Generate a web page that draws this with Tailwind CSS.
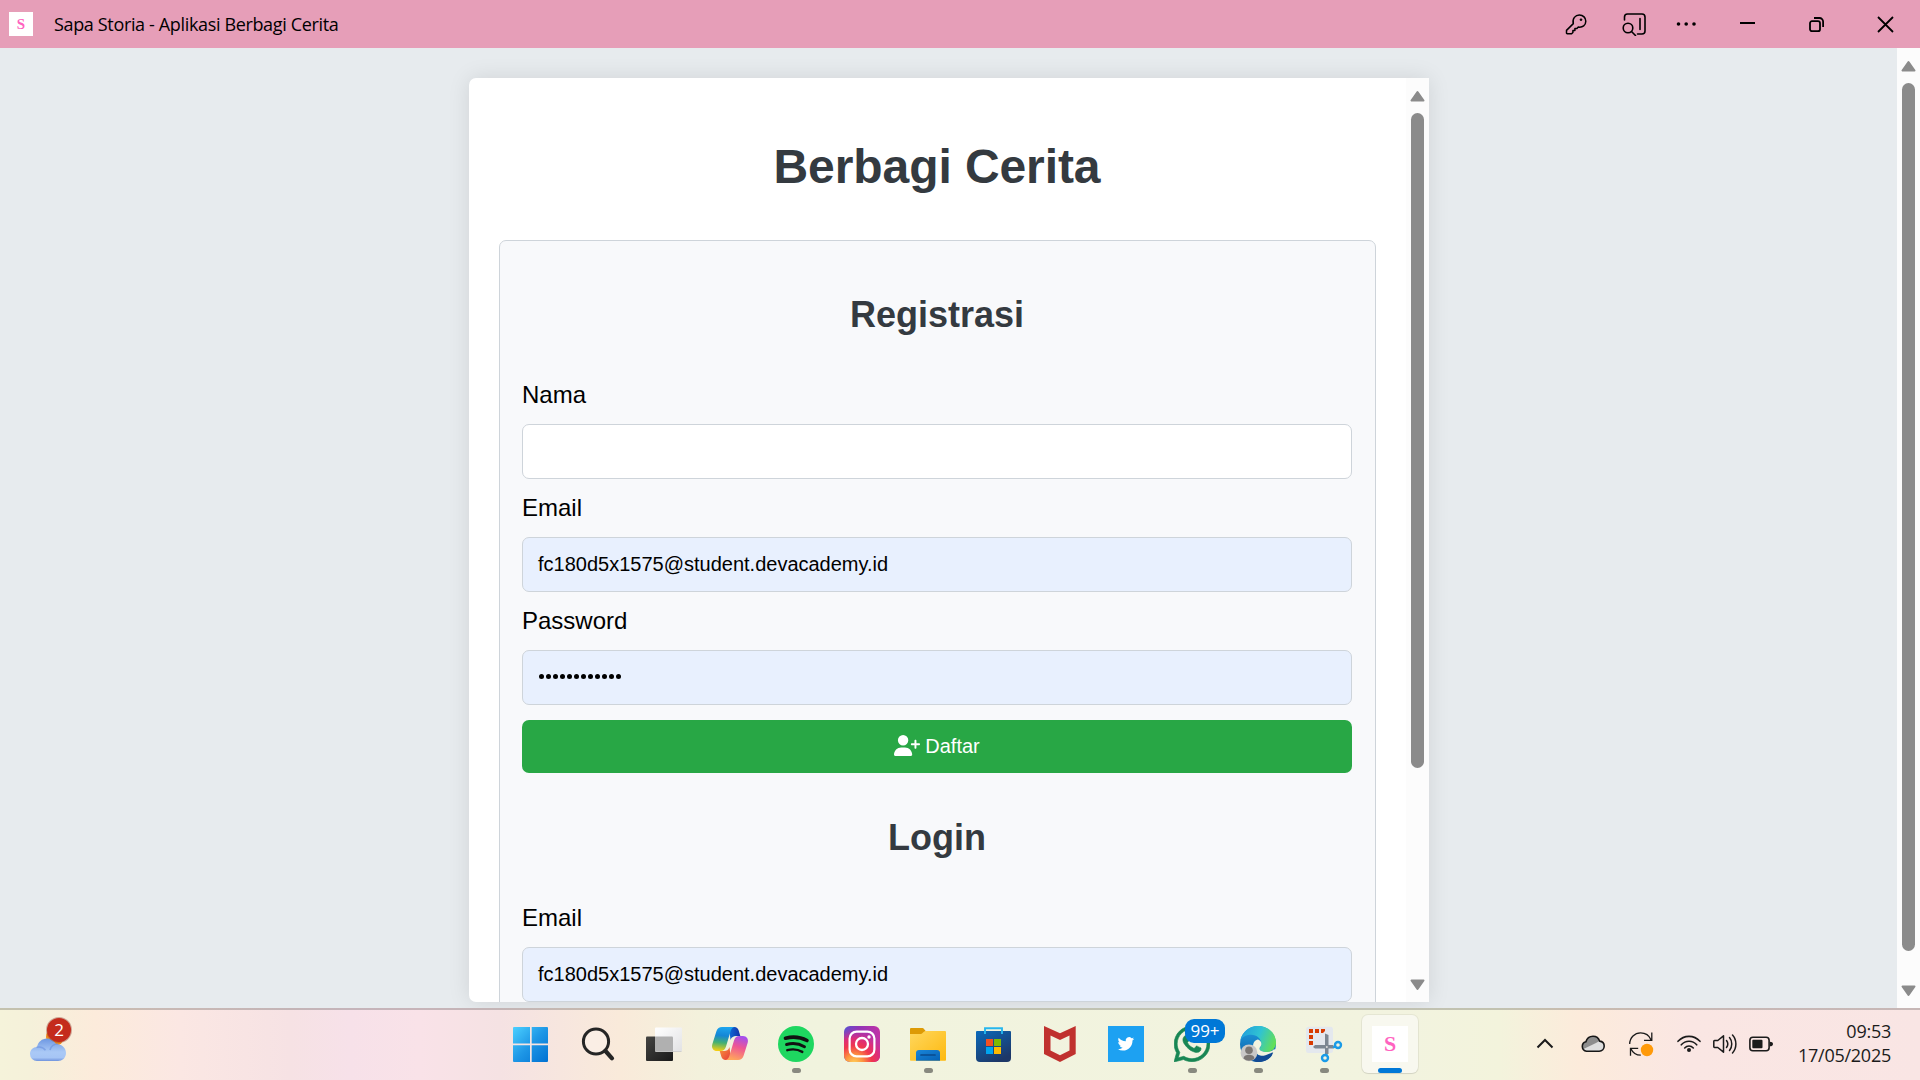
<!DOCTYPE html>
<html lang="id">
<head>
<meta charset="utf-8">
<title>Sapa Storia - Aplikasi Berbagi Cerita</title>
<script src="https://cdn.jsdelivr.net/npm/@tailwindcss/browser@4"></script>
</head>
<body class="w-[1920px] h-[1080px] overflow-hidden flex flex-col font-['Liberation_Sans',Arial,sans-serif] text-black">

<!-- Title bar -->
<header class="h-12 shrink-0 bg-[#e69eb8] flex items-center pl-[9px] font-['Open_Sans',sans-serif]">
  <div class="size-6 bg-white flex items-center justify-center font-['Liberation_Serif',serif] font-bold text-[15px] leading-none text-[#ff63c0]">S</div>
  <h1 class="ml-[21px] text-[18px] tracking-[-0.35px] leading-6 whitespace-nowrap">Sapa Storia - Aplikasi Berbagi Cerita</h1>
  <div class="ml-auto flex items-center">
    <svg class="w-6 h-6 mr-[34px]" viewBox="0 0 24 24" fill="none" stroke="#000" stroke-width="1.5" stroke-linejoin="round"><path d="M9.3 11.6C8 6.5 11.500 3 15.300 3c4 0 6.500 2.900 6.500 6.200 0 3.800-3.200 6.600-7.500 5.800l-1.400 1.500h-2v2h-2v2L7.600 21.700H3.200c-.4 0-.7-.3-.7-.7v-2.600z"/><circle cx="17" cy="7.700" r="1" fill="#000" stroke-width=".6"/></svg>
    <svg class="w-6 h-6 mr-[28px]" viewBox="0 0 24 24" fill="none" stroke="#000" stroke-width="1.600" stroke-linecap="round"><path d="M2.500 8V5a3 3 0 0 1 3-3H20a3 3 0 0 1 3 3v14a3 3 0 0 1-3 3h-4.500M18 6.500v11M9.500 19.500l4 4"/><circle cx="6" cy="16" r="4.800"/></svg>
    <svg class="w-6 h-6 mr-[42px]" viewBox="0 0 24 24"><circle cx="4.500" cy="12" r="1.800"/><circle cx="12.200" cy="12" r="1.800"/><circle cx="20" cy="12" r="1.800"/></svg>
    <svg class="w-[15px] h-6 mr-[54px]" viewBox="0 0 15 24"><rect y="10" width="15" height="2"/></svg>
    <svg class="w-[15px] h-[15px] mr-[54px] overflow-visible" viewBox="0 0 15 15" fill="none" stroke="#000" stroke-width="1.800"><rect x="1" y="4.200" width="10" height="10" rx="2"/><path d="M5 1h5.500A3.600 3.600 0 0 1 14.100 4.600V10"/></svg>
    <svg class="w-[15px] h-[15px] mr-[27px] overflow-visible" viewBox="0 0 15 15" stroke="#000" stroke-width="1.800"><path d="M0 0l15 15M15 0L0 15"/></svg>
  </div>
</header>

<!-- Web page -->
<main class="h-[960px] shrink-0 bg-[#e7ebee] flex overflow-hidden">
  <div class="flex-1 pt-[30px] pl-[469px]">
    <div class="w-[960px] h-[924px] bg-white rounded-l-[7px] flex overflow-hidden shadow-[0_0_22px_rgba(0,0,0,0.1)]">
      <div class="w-[937px] h-full pt-[61px] pl-[30px] pr-[30px]">
        <h1 class="text-center text-[48px] leading-[55px] font-bold text-[#343a40] tracking-[-0.08px] pr-px">Berbagi Cerita</h1>
        <section class="mt-[46px] h-[1200px] border border-[#ced4da] rounded-[7px] bg-[#f8f9fb] pl-[22px] pr-[23px] pt-[53px]">
          <h2 class="text-center text-[36px] leading-[41px] font-bold text-[#343a40] mb-[46px]">Registrasi</h2>
          <form class="flex flex-col gap-[15px] text-[24px] leading-[28px]">
            <label>Nama</label>
            <div class="h-[55px] bg-white border border-[#ced4da] rounded-[7px]"></div>
            <label>Email</label>
            <div class="h-[55px] bg-[#e8f0fe] border border-[#ced4da] rounded-[7px] px-[15px] pb-[2px] flex items-center text-[20px]">fc180d5x1575@student.devacademy.id</div>
            <label>Password</label>
            <div class="h-[55px] bg-[#e8f0fe] border border-[#ced4da] rounded-[7px] px-4 pb-[2px] flex items-center gap-[2px]">
              <i class="size-[5px] rounded-full bg-black"></i><i class="size-[5px] rounded-full bg-black"></i><i class="size-[5px] rounded-full bg-black"></i><i class="size-[5px] rounded-full bg-black"></i><i class="size-[5px] rounded-full bg-black"></i><i class="size-[5px] rounded-full bg-black"></i><i class="size-[5px] rounded-full bg-black"></i><i class="size-[5px] rounded-full bg-black"></i><i class="size-[5px] rounded-full bg-black"></i><i class="size-[5px] rounded-full bg-black"></i><i class="size-[5px] rounded-full bg-black"></i><i class="size-[5px] rounded-full bg-black"></i>
            </div>
            <button type="button" class="h-[53px] bg-[#28a745] rounded-[7px] pb-[2px] flex items-center justify-center gap-[5px] text-white text-[20px]">
              <svg class="w-[26px] h-[21px]" viewBox="0 0 640 512" fill="#fff"><path d="M96 128a128 128 0 1 1 256 0A128 128 0 1 1 96 128zM0 482.300C0 383.800 79.800 304 178.300 304h91.400C368.200 304 448 383.800 448 482.300c0 16.400-13.300 29.700-29.700 29.700H29.700C13.300 512 0 498.700 0 482.300zM504 312V248H440c-13.300 0-24-10.700-24-24s10.700-24 24-24h64V136c0-13.300 10.700-24 24-24s24 10.700 24 24v64h64c13.300 0 24 10.700 24 24s-10.700 24-24 24H552v64c0 13.300-10.700 24-24 24s-24-10.700-24-24z"/></svg>
              <span>Daftar</span>
            </button>
          </form>
          <h2 class="mt-[44px] text-center text-[36px] leading-[41px] font-bold text-[#343a40] mb-[46px]">Login</h2>
          <form class="flex flex-col gap-[15px] text-[24px] leading-[28px]">
            <label>Email</label>
            <div class="h-[55px] bg-[#e8f0fe] border border-[#ced4da] rounded-[7px] px-[15px] pb-[2px] flex items-center text-[20px]">fc180d5x1575@student.devacademy.id</div>
          </form>
        </section>
      </div>
      <div class="w-[23px] h-full bg-[#fcfcfc] flex flex-col items-center pt-3">
        <svg class="w-[15px] h-[12px] shrink-0" viewBox="0 0 15 12" fill="#8b8b8b" stroke="#8b8b8b" stroke-width="2" stroke-linejoin="round"><path d="M7.500 2L1.500 10.500h12z"/></svg>
        <div class="mt-[11px] w-[13px] h-[655px] rounded-full bg-[#8b8b8b]"></div>
        <svg class="mt-[211px] w-[15px] h-[12px] shrink-0" viewBox="0 0 15 12" fill="#8b8b8b" stroke="#8b8b8b" stroke-width="2" stroke-linejoin="round"><path d="M7.500 10L1.500 1.500h12z"/></svg>
      </div>
    </div>
  </div>
  <div class="w-[23px] h-full bg-[#fcfcfc] flex flex-col items-center pt-3">
    <svg class="w-[15px] h-[12px] shrink-0" viewBox="0 0 15 12" fill="#8b8b8b" stroke="#8b8b8b" stroke-width="2" stroke-linejoin="round"><path d="M7.500 2L1.500 10.500h12z"/></svg>
    <div class="mt-[11px] w-[13px] h-[868px] rounded-full bg-[#8b8b8b]"></div>
    <svg class="mt-[34px] w-[15px] h-[12px] shrink-0" viewBox="0 0 15 12" fill="#8b8b8b" stroke="#8b8b8b" stroke-width="2" stroke-linejoin="round"><path d="M7.500 10L1.500 1.500h12z"/></svg>
  </div>
</main>

<!-- Taskbar -->
<footer class="h-[72px] shrink-0 flex items-stretch font-['Open_Sans',sans-serif] bg-[linear-gradient(90deg,#f5f3da_0px,#f5f1da_30px,#fcebdb_95px,#fbe7e3_180px,#f6e2e4_290px,#f7e1e9_350px,#f9e2e8_420px,#f5e2e3_500px,#f9eada_620px,#f3f1dc_700px,#f1f3de_790px,#f2f3df_1400px,#f3f3dc_1500px,#fcebdb_1580px,#fae6e3_1690px,#f9e5e4_1920px)]">
  <div class="w-[499px] border-t-2 border-black/20 pl-[30px] pt-[4px]">
    <div class="relative w-9 h-[47px]">
      <svg class="w-9 h-[47px] overflow-visible" viewBox="0 0 36 47">
        <defs><linearGradient id="cl" x1="0" y1="0" x2="0" y2="1"><stop offset="0" stop-color="#6d97e2"/><stop offset=".6" stop-color="#aac9f6"/><stop offset=".85" stop-color="#a6c5f5"/><stop offset="1" stop-color="#6f93dd"/></linearGradient></defs>
        <circle cx="25" cy="23" r="9" fill="#f28a1c"/>
        <path d="M7 47a7 7 0 0 1-7-7c0-4 3-7 7-7C8 28 12 24.500 17 24.500c4 0 7 2 9 5.500 6 0 10 4 10 9 0 5-4 8-8 8z" fill="url(#cl)"/>
        <path d="M6.500 33.300c4-1 7 .3 9 3M20 36c1-4 4-6 8-6" fill="none" stroke="#6990dd" stroke-opacity=".6" stroke-width="1.500"/>
      </svg>
      <span class="absolute left-[17px] top-[4px] size-6 rounded-full bg-[#c42b1c] ring-1 ring-[#8d3a30]/40 text-white text-[17px] leading-6 text-center">2</span>
    </div>
  </div>

  <nav class="w-[924px] border-t-2 border-black/20 grid grid-cols-14">
    <div class="flex flex-col items-center pt-4"><svg class="size-9 overflow-visible" viewBox="0 0 36 36"><defs><linearGradient id="w" x1="0" y1="0" x2="1" y2="1" ><stop offset="0" stop-color="#4cd0ff"/><stop offset=".5" stop-color="#1e97e6"/><stop offset="1" stop-color="#0071d2"/></linearGradient></defs><path fill="url(#w)" d="M0 1h16v16.500H-1V2a1 1 0 0 1 1-1zM17.700 1H33a1 1 0 0 1 1 1v15.500H17.700zM-1 19.300h17V36H0a1 1 0 0 1-1-1zM17.700 19.300H34V35a1 1 0 0 1-1 1H17.700z"/></svg></div>
    <div class="flex flex-col items-center pt-4"><svg class="size-9" viewBox="0 0 36 36" fill="none" stroke="#252525"><circle cx="16" cy="15.500" r="12.600" stroke-width="3" fill="#fff" fill-opacity=".25"/><path d="M25.500 25l6.500 7.300" stroke-width="4.200" stroke-linecap="round"/></svg></div>
    <div class="flex flex-col items-center pt-4"><svg class="size-9 overflow-visible" viewBox="0 0 36 36"><defs><linearGradient id="tv" x1="0" y1="0" x2="1" y2="1"><stop offset="0" stop-color="#444442"/><stop offset="1" stop-color="#191919"/></linearGradient><linearGradient id="tl" x1="0" y1="0" x2="1" y2="1"><stop offset="0" stop-color="#fff"/><stop offset="1" stop-color="#e2e2e4"/></linearGradient></defs><rect y="10.500" width="27" height="24.500" rx="1" fill="url(#tv)"/><rect x="9" y="1.500" width="27" height="24" rx="1" fill="url(#tl)"/><path d="M9 10.500h17a1 1 0 0 1 1 1v14H10a1 1 0 0 1-1-1z" fill="#b0b0b0"/><path d="M9.500 25.500h26" stroke="#c9c9c9" stroke-width=".8"/></svg></div>
    <div class="flex flex-col items-center pt-4"><svg class="size-9 overflow-visible" viewBox="0 0 36 36"><defs><linearGradient id="c1" x1=".4" y1="0" x2=".3" y2="1"><stop offset="0" stop-color="#1ca4ee"/><stop offset=".35" stop-color="#1486d6"/><stop offset=".65" stop-color="#45b072"/><stop offset="1" stop-color="#f9cf10"/></linearGradient><linearGradient id="c2" x1=".7" y1="0" x2=".4" y2="1"><stop offset="0" stop-color="#a24ef0"/><stop offset=".45" stop-color="#ee5594"/><stop offset="1" stop-color="#ffa65c"/></linearGradient><linearGradient id="c3" x1="0" y1="0" x2="1" y2="0"><stop offset="0" stop-color="#0e6bd8"/><stop offset="1" stop-color="#1331a8"/></linearGradient><linearGradient id="c4" x1="0" y1="0" x2="1" y2="1"><stop offset="0" stop-color="#f9983a"/><stop offset="1" stop-color="#e5393b"/></linearGradient></defs>
      <path fill="url(#c3)" d="M17 1h5.500c2 0 3.500 1.200 4.200 3.500L28.300 10H24c-2.500 0-4.500 1-5.500 4z"/>
      <path fill="url(#c4)" d="M19 34h-5.500c-2 0-3.500-1.200-4.200-3.500L7.700 25H12c2.500 0 4.500-1 5.500-4z"/>
      <path fill="url(#c1)" d="M10 1h12.500c-2.200.6-3.200 2-4 4.500L14 20.500c-1 3.200-2.600 4.500-5.500 4.500H5c-3.600 0-5.800-3-4.700-6.800L4.500 5C5.400 2.400 7.300 1 10 1z"/>
      <path fill="url(#c2)" d="M26 34H13.500c2.200-.6 3.200-2 4-4.500L22 14.500c1-3.200 2.600-4.500 5.500-4.500H31c3.600 0 5.800 3 4.700 6.800L31.500 30c-.9 2.600-2.800 4-5.500 4z"/></svg></div>
    <div class="flex flex-col items-center pt-4"><svg class="size-9" viewBox="0 0 36 36" fill="none" stroke="#111" stroke-linecap="round"><circle cx="18" cy="18" r="18" fill="#1ed760" stroke="none"/><path d="M7.500 12.200c7.500-2 15-1.200 21.500 2.300" stroke-width="3.600"/><path d="M8.500 18.500c6-1.700 12.500-1 18 2.200" stroke-width="2.900"/><path d="M9.300 24.200c5-1.400 10.500-.9 15 1.700" stroke-width="2.400"/></svg><i class="mt-[6px] w-[9px] h-[5px] rounded-full bg-[#88897f]"></i></div>
    <div class="flex flex-col items-center pt-4"><svg class="size-9" viewBox="0 0 36 36" fill="none" stroke="#fff"><defs><linearGradient id="ig" x1="0" y1="0" x2="1" y2="0"><stop offset="0" stop-color="#5b51d0"/><stop offset=".4" stop-color="#8e35b8"/><stop offset="1" stop-color="#c132a6"/></linearGradient><radialGradient id="ih" cx=".28" cy="1.050" r="1"><stop offset="0" stop-color="#ffd45c"/><stop offset=".25" stop-color="#fd9440"/><stop offset=".5" stop-color="#f0364d"/><stop offset=".7" stop-color="#dd2d78"/><stop offset="1" stop-color="#c132a6" stop-opacity="0"/></radialGradient></defs><rect width="36" height="36" rx="6" fill="url(#ig)" stroke="none"/><rect width="36" height="36" rx="6" fill="url(#ih)" stroke="none"/><rect x="5.600" y="5.600" width="24.800" height="24.800" rx="7" stroke-width="2.200"/><circle cx="18" cy="18" r="6" stroke-width="2.300"/><circle cx="25" cy="11" r="1.700" fill="#fff" stroke="none"/></svg></div>
    <div class="flex flex-col items-center pt-4"><svg class="size-9" viewBox="0 0 36 36"><defs><linearGradient id="fo" x1="0" y1="0" x2="1" y2="1"><stop offset="0" stop-color="#ffd75e"/><stop offset="1" stop-color="#fdb90f"/></linearGradient><linearGradient id="fb" x1="0" y1="0" x2="1" y2="1"><stop offset="0" stop-color="#1a86d9"/><stop offset="1" stop-color="#0561b5"/></linearGradient></defs><path d="M0 10V3a1 1 0 0 1 1-1h11.500c1 0 2.500 2 3 3v3z" fill="#dd9a05"/><path d="M0 8h11c1.500 0 2.500-3 4.500-3H35a1 1 0 0 1 1 1v28a.8.8 0 0 1-.8.800H.8A.8.800 0 0 1 0 34z" fill="url(#fo)"/><path d="M6 34.800V27a3 3 0 0 1 3-3h18a3 3 0 0 1 3 3v7.800z" fill="url(#fb)"/><path d="M11 29h14" stroke="#0a4a8c" stroke-width="1.700" stroke-linecap="round"/></svg><i class="mt-[6px] w-[9px] h-[5px] rounded-full bg-[#88897f]"></i></div>
    <div class="flex flex-col items-center pt-4"><svg class="size-9" viewBox="0 0 36 36"><defs><linearGradient id="st" x1="0" y1="0" x2=".6" y2="1"><stop offset="0" stop-color="#0a69bb"/><stop offset="1" stop-color="#1d3767"/></linearGradient></defs><path d="M0 6a1 1 0 0 1 1-1h33a1 1 0 0 1 1 1v26a4 4 0 0 1-4 4H4a4 4 0 0 1-4-4z" fill="url(#st)"/><path d="M9 8V2.200h17V8" fill="none" stroke="#27b7ee" stroke-width="1.900"/><path fill="#f25022" d="M10 13h7v7h-7z"/><path fill="#7fba00" d="M18 13h7v7h-7z"/><path fill="#00a4ef" d="M10 21h7v7h-7z"/><path fill="#ffb900" d="M18 21h7v7h-7z"/></svg></div>
    <div class="flex flex-col items-center pt-4"><svg class="size-9" viewBox="0 0 36 36"><path fill="#c0312e" fill-rule="evenodd" d="M2 0l16 7.300L33.700 0v28L18 36 2 28zM8.500 9.500v15L18 29.200l9.500-4.700v-15L18 14z"/></svg></div>
    <div class="flex flex-col items-center pt-4"><svg class="size-9" viewBox="0 0 36 36"><path fill="#1da1f2" d="M0 0h36v36H0z"/><path fill="#fff" transform="translate(9.600 9.600) scale(.69)" d="M23.953 4.570a10 10 0 01-2.825.775 4.958 4.958 0 002.163-2.723c-.951.555-2.005.959-3.127 1.184a4.920 4.920 0 00-8.384 4.482C7.690 8.095 4.067 6.130 1.640 3.162a4.822 4.822 0 00-.666 2.475c0 1.710.87 3.213 2.188 4.096a4.904 4.904 0 01-2.228-.616v.06a4.923 4.923 0 003.946 4.827 4.996 4.996 0 01-2.212.085 4.936 4.936 0 004.604 3.417 9.867 9.867 0 01-6.102 2.105c-.39 0-.779-.023-1.170-.067a13.995 13.995 0 007.557 2.209c9.053 0 13.998-7.496 13.998-13.985 0-.21 0-.42-.015-.63A9.935 9.935 0 0024 4.590z"/></svg></div>
    <div class="relative flex flex-col items-center pt-4"><svg class="size-9" viewBox="0 32 448 448" fill="#188654" stroke="#188654" stroke-width="8"><path d="M380.900 97.100C339 55.100 283.200 32 223.900 32c-122.400 0-222 99.600-222 222 0 39.100 10.200 77.300 29.600 111L0 480l117.700-30.900c32.400 17.700 68.900 27 106.100 27h.1c122.300 0 224.100-99.600 224.100-222 0-59.300-25.200-115-67.100-157zm-157 341.600c-33.200 0-65.700-8.900-94-25.700l-6.700-4-69.800 18.300L72 359.200l-4.400-7c-18.500-29.400-28.200-63.300-28.200-98.200 0-101.700 82.800-184.500 184.600-184.500 49.300 0 95.600 19.200 130.400 54.100 34.800 34.900 56.200 81.200 56.100 130.500 0 101.800-84.900 184.600-186.600 184.600zm101.200-138.200c-5.500-2.800-32.800-16.200-37.900-18-5.100-1.900-8.800-2.800-12.500 2.800-3.700 5.600-14.300 18-17.600 21.800-3.200 3.700-6.500 4.200-12 1.400-32.600-16.300-54-29.100-75.500-66-5.700-9.800 5.700-9.100 16.300-30.300 1.800-3.700.9-6.900-.5-9.700-1.400-2.800-12.500-30.100-17.100-41.200-4.500-10.800-9.100-9.300-12.500-9.500-3.200-.2-6.900-.2-10.600-.2-3.700 0-9.700 1.400-14.800 6.900-5.100 5.600-19.400 19-19.400 46.300 0 27.300 19.900 53.700 22.600 57.400 2.800 3.700 39.100 59.700 94.800 83.800 35.200 15.200 49 16.500 66.600 13.900 10.700-1.600 32.800-13.400 37.400-26.400 4.600-13 4.600-24.100 3.200-26.400-1.300-2.500-5-3.900-10.500-6.600z"/></svg><i class="mt-[6px] w-[9px] h-[5px] rounded-full bg-[#88897f]"></i>
      <span class="absolute left-[26px] top-[9px] w-10 h-6 rounded-[9px] bg-[#0078d7] text-white text-[17px] leading-6 text-center">99+</span></div>
    <div class="flex flex-col items-center pt-4"><svg class="size-9 overflow-visible" viewBox="0 0 36 36"><defs><linearGradient id="e1" x1="0" y1=".3" x2="1" y2=".6"><stop offset="0" stop-color="#219fdc"/><stop offset=".5" stop-color="#30c3d2"/><stop offset="1" stop-color="#66e053"/></linearGradient><linearGradient id="e2" x1="0" y1="0" x2="0" y2="1"><stop offset="0" stop-color="#1fa1e2"/><stop offset="1" stop-color="#0c59a4"/></linearGradient></defs><circle cx="18" cy="18" r="18" fill="url(#e2)"/><path d="M.3 14.500C2 6 9.500 0 18 0c11 0 18 8 18 16.500 0 5.500-4 9.500-9.500 9.500-4.500 0-7-1.700-7-3.200 0-1 1.800-1.800 1.800-4.800C21.300 13 17 8.800 11 8.800 5.500 8.800 2 11.500.3 14.500z" fill="url(#e1)"/><path d="M13.500 23c-1.500-5 1-9 4.500-9.500 2.500 1 3.800 3 3.300 5.300-.5 2-1.800 2.700-1.800 4 0 1.500 2.500 3.200 7 3.200 3 0 5.500-.8 7.500-2.800l4 1-2.500 4.500-4 .5c-7 3-15 1-18-6.200z" fill="#f2f3df"/><path d="M12 23c1.500 5 7.500 8.200 13.500 6.200 3.500-1.200 6.500-3 7.700-2.600C31.500 32 25.500 36 18 36c-5 0-8-5-6-13z" fill="#134b94"/><circle cx="9" cy="26.800" r="8.400" fill="#c9c8c7"/><circle cx="9" cy="24.300" r="3.800" fill="#7a7673"/><path d="M3.500 32.500c.5-3 2.800-3.700 5.500-3.700s5 .7 5.500 3.700A8.400 8.400 0 0 1 9 34.800a8.400 8.400 0 0 1-5.500-2.300z" fill="#7a7673"/></svg><i class="mt-[6px] w-[9px] h-[5px] rounded-full bg-[#88897f]"></i></div>
    <div class="flex flex-col items-center pt-4"><svg class="size-9 overflow-visible" viewBox="0 0 36 36" fill="none"><rect y=".7" width="27" height="26.300" rx="2.500" fill="#e4e8ee"/><path fill="#d83b01" d="M3 3h4v4H3zM9 3h4v4H9zM15 3h4v2l-2 2h-2zM3 9h4v4H3zM3 15h4v4H3z"/><path d="M19 7.500l3.500 1.500v19h-3.500zM7 21l2-2h18.500v3.500H9z" fill="#7d8792"/><circle cx="20.800" cy="21" r="1" fill="#ddd"/><circle cx="32" cy="19" r="3" stroke="#1a9be8" stroke-width="2.400"/><circle cx="19" cy="32" r="3" stroke="#1a9be8" stroke-width="2.400"/><path d="M27 21.500l2.500-1M20.800 28l-.5 1.500" stroke="#1a9be8" stroke-width="2.200"/></svg><i class="mt-[6px] w-[9px] h-[5px] rounded-full bg-[#88897f]"></i></div>
    <div class="flex flex-col items-center pt-[5px]"><div class="w-14 h-[58px] rounded-md bg-[#f8f8ef] ring-1 ring-black/5 shadow-[0_1px_1px_rgba(0,0,0,0.08)] flex flex-col items-center pt-[11px]"><div class="size-9 shrink-0 bg-white flex items-center justify-center font-['Liberation_Serif',serif] font-bold text-[22px] leading-none text-[#ff63c0]">S</div><i class="mt-[6px] w-6 h-[5px] shrink-0 rounded-full bg-[#0078d7]"></i></div></div>
  </nav>

  <div class="flex-1 border-t-2 border-black/20 flex items-start pt-[22px] pl-[110px] pr-[29px]">
    <svg class="size-6 mr-6" viewBox="0 0 24 24" fill="none" stroke="#1b1b1b" stroke-width="2"><path d="M4.500 15.500l7.500-7.500 7.500 7.500"/></svg>
    <svg class="size-6 mr-6" viewBox="0 0 24 24"><path d="M5.500 19.200a4.800 4.800 0 0 1-.6-9.400C6 6 9 4.300 12 4.300c3.500 0 5.700 2 6.600 4.800 3 .3 4.600 2.500 4.600 5 0 3-2.200 5.100-5 5.100z" fill="#8d8d8d"/><path d="M5.500 19.200a4.800 4.800 0 0 1-3.500-2L15 11l3-1.800c3.500 0 5.200 2.500 5.200 5 0 3-2.200 5-5 5z" fill="#dedede"/><path d="M5.500 19.200a4.800 4.800 0 0 1-.6-9.400C6 6 9 4.300 12 4.300c3.500 0 5.700 2 6.600 4.800 3 .3 4.600 2.500 4.600 5 0 3-2.200 5.100-5 5.100z" fill="none" stroke="#161616" stroke-width="1.600"/></svg>
    <svg class="size-6 mr-6 overflow-visible" viewBox="0 0 24 24" fill="none" stroke="#1b1b1b" stroke-width="1.300"><path d="M.7 12C.7 5.500 5.800.8 11.500.8c5 0 8.800 2.700 10.500 7M22.800.5v7.800H15M1.500 23.800v-7.500h7.700M1.800 16.500c2 4.500 5.500 6.700 10 6.700"/><circle cx="18" cy="18" r="6.200" fill="#ff9a0a" stroke="none"/></svg>
    <svg class="size-6 mr-3" viewBox="0 0 24 24" fill="none" stroke="#1b1b1b" stroke-width="1.600" stroke-linecap="round"><path d="M1 9.300c6-6.600 16-6.600 22 0M4.300 12.800c4.200-4.700 11.200-4.700 15.400 0M7.700 16c2.400-2.600 6.200-2.600 8.600 0"/><circle cx="12" cy="18" r="2" fill="#1b1b1b" stroke="none"/></svg>
    <svg class="size-6 mr-3" viewBox="0 0 24 24" fill="none" stroke="#1b1b1b" stroke-width="1.500" stroke-linejoin="round" stroke-linecap="round"><path d="M1.500 8.500h3.300L10.500 3.800v16.400l-5.700-4.700H1.500a.7.700 0 0 1-.7-.7V9.200a.7.700 0 0 1 .7-.7zM13.500 8.500c1.500 2 1.500 5 0 7M16.500 5.500c3 3.500 3 9.500 0 13M19.500 3c4.500 5 4.500 13 0 18"/></svg>
    <svg class="size-6" viewBox="0 0 24 24"><rect x=".9" y="5.200" width="19.200" height="13.600" rx="3" fill="none" stroke="#1b1b1b" stroke-width="1.600"/><rect x="3.300" y="7.800" width="10.200" height="8.400" rx="1" fill="#1b1b1b"/><path d="M20.800 9.700c2 0 3.200.8 3.200 2.300s-1.200 2.300-3.200 2.300z" fill="#1b1b1b"/></svg>
    <div class="ml-auto -mt-[13px] text-right text-[18px] leading-6 tracking-[-0.25px] text-[#1b1b1b]"><div>09:53</div><div>17/05/2025</div></div>
  </div>
</footer>
</body>
</html>
